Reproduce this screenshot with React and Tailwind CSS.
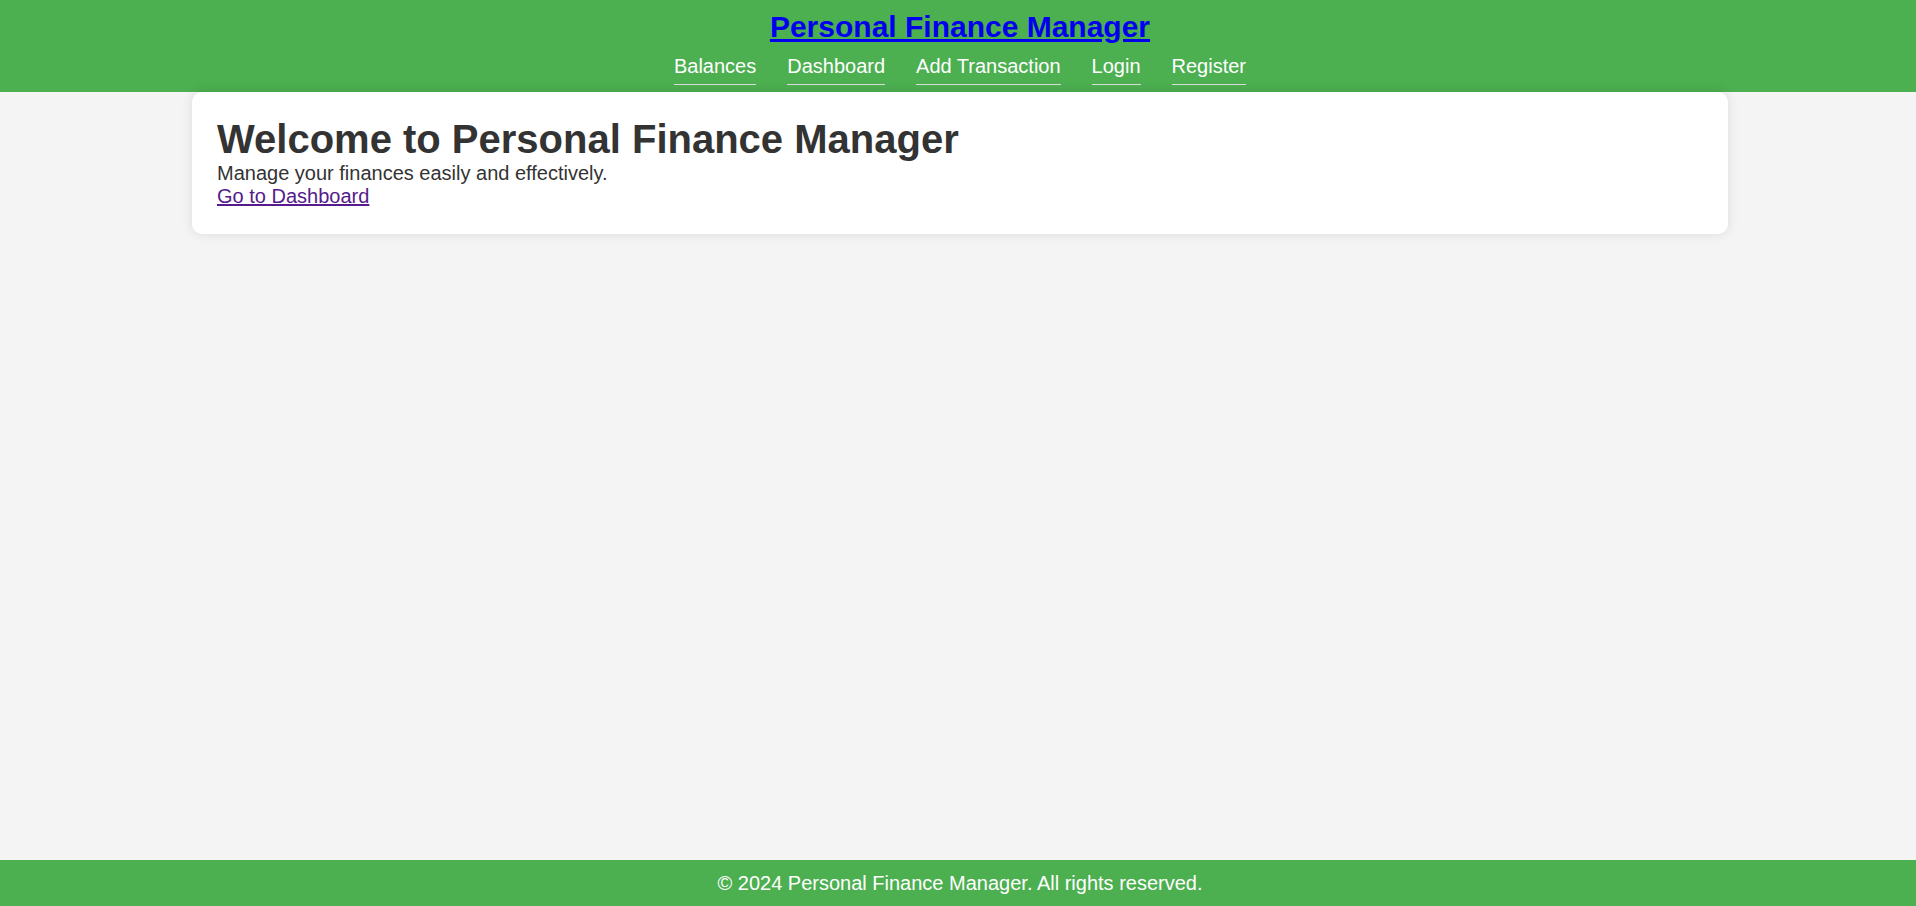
export default function App() {
  const links = ["Balances", "Dashboard", "Add Transaction", "Login", "Register"];
  return (
    <div className="min-h-screen flex flex-col bg-[#f4f4f4] text-[#333]" style={{ fontFamily: '"Liberation Sans", Arial, sans-serif' }}>
      <header className="bg-[#4caf50] text-white text-center pl-[4px] pt-[10px] pb-[7px]">
        <h1 className="text-[30px] font-bold leading-[34px]">
          <a href="#" className="text-[#0000ee] underline">Personal Finance Manager</a>
        </h1>
        <nav className="flex justify-center gap-[31px] mt-[11px]">
          {links.map((l) => (
            <a key={l} href="#" className="text-white text-[20px] leading-[23px] pb-[6px] border-b border-[#dcdcdc]">{l}</a>
          ))}
        </nav>
      </header>
      <main className="flex-1">
        <div className="w-[1536px] ml-[192px] bg-white rounded-[10px] shadow-[0_0_12px_rgba(0,0,0,0.1)] px-[25px] pt-[25px] pb-[24px]">
          <h2 className="text-[40px] font-bold leading-[45px]">Welcome to Personal Finance Manager</h2>
          <p className="text-[20px] leading-[23px]">Manage your finances easily and effectively.</p>
          <a href="#" className="text-[20px] leading-[23px] text-[#551a8b] underline">Go to Dashboard</a>
        </div>
      </main>
      <footer className="bg-[#4caf50] text-white text-center text-[20px] pl-[4px] h-[46px] flex items-center justify-center">
        © 2024 Personal Finance Manager. All rights reserved.
      </footer>
    </div>
  );
}
